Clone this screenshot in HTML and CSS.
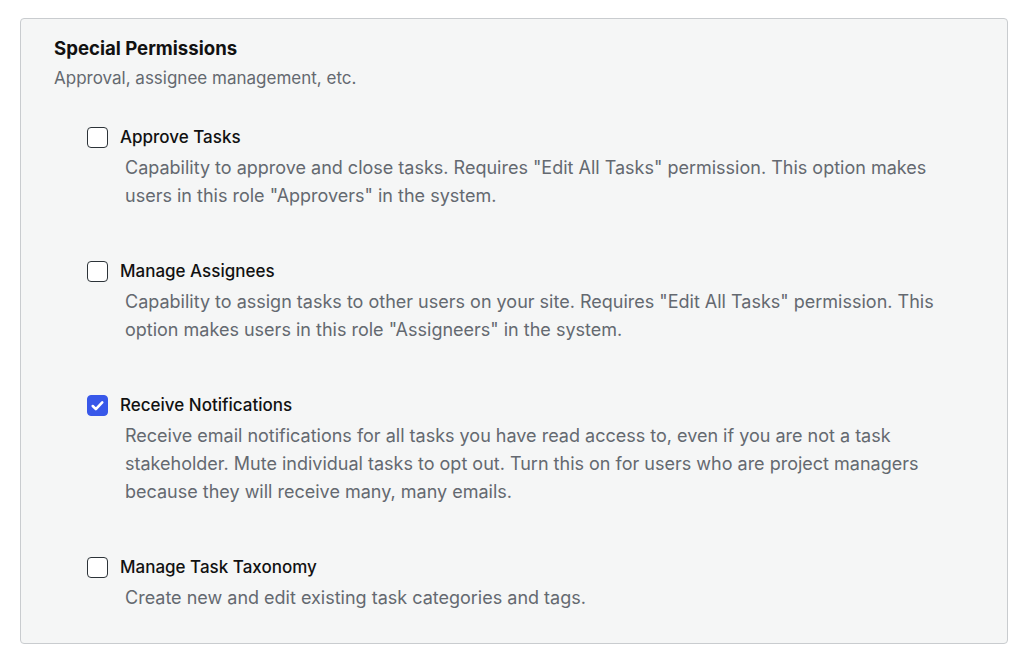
FILE: index.html
```html
<!DOCTYPE html>
<html lang="en">
<head>
	<meta charset="UTF-8">
	<title>Special Permissions</title>
	<link rel="stylesheet" href="styles.css">
</head>
<body>

	<div class="panel">
		<h2 class="panel-title">Special Permissions</h2>
		<p class="panel-desc">Approval, assignee management, etc.</p>

		<div class="perm-list">
			<div class="perm">
				<label class="perm-label"><span class="check"></span>Approve Tasks</label>
				<p class="perm-desc">Capability to approve and close tasks. Requires "Edit All Tasks" permission. This option makes users in this role "Approvers" in the system.</p>
			</div>
			<div class="perm">
				<label class="perm-label"><span class="check"></span>Manage Assignees</label>
				<p class="perm-desc">Capability to assign tasks to other users on your site. Requires "Edit All Tasks" permission. This option makes users in this role "Assigneers" in the system.</p>
			</div>
			<div class="perm">
				<label class="perm-label"><span class="check checked"><svg viewBox="0 0 22 22" width="21" height="21"><path d="M5.5 11.6l3.6 3.6L16.5 7.4" fill="none" stroke="#fff" stroke-width="3" stroke-linecap="round" stroke-linejoin="round"/></svg></span>Receive Notifications</label>
				<p class="perm-desc">Receive email notifications for all tasks you have read access to, even if you are not a task stakeholder. Mute individual tasks to opt out. Turn this on for users who are project managers because they will receive many, many emails.</p>
			</div>
			<div class="perm">
				<label class="perm-label"><span class="check"></span>Manage Task Taxonomy</label>
				<p class="perm-desc">Create new and edit existing task categories and tags.</p>
			</div>
		</div>
	</div>

</body>
</html>
```

FILE: styles.css
```css
*{
	margin: 0;
	padding: 0;
	box-sizing: border-box;
}
body{
	background: #fff;
	font-family: Inter, "Liberation Sans", Arial, sans-serif;
	color: #1d2327;
	padding: 18px 16px 16px 20px;
}
.panel{
	background: #f5f6f6;
	border: 1px solid #c9cccf;
	border-radius: 4px;
	height: 626px;
	padding: 17px 33px 0 33px;
}
.panel-title{
	font-size: 18.6px;
	font-weight: 700;
	line-height: 24px;
	color: #111;
}
.panel-desc{
	font-size: 17px;
	line-height: 24px;
	color: #646970;
	margin-top: 6px;
}
.perm-list{
	padding-left: 33px;
	margin-top: 35px;
}
.perm{
	margin-bottom: 49px;
}
.perm-label{
	display: flex;
	align-items: center;
	font-size: 17px;
	font-weight: 500;
	line-height: 24px;
	color: #111;
}
.check{
	width: 21px;
	height: 21px;
	border: 1.5px solid #2c3338;
	border-radius: 4px;
	background: #fff;
	margin-right: 12px;
	flex-shrink: 0;
	display: flex;
	align-items: center;
	justify-content: center;
}
.check.checked{
	background: #3858e9;
	border-color: #3858e9;
}
.check svg{
	display: block;
}
.perm-desc{
	font-size: 18px;
	line-height: 28px;
	color: #646970;
	margin-top: 5px;
	padding-left: 38px;
	padding-right: 20px;
}
```
